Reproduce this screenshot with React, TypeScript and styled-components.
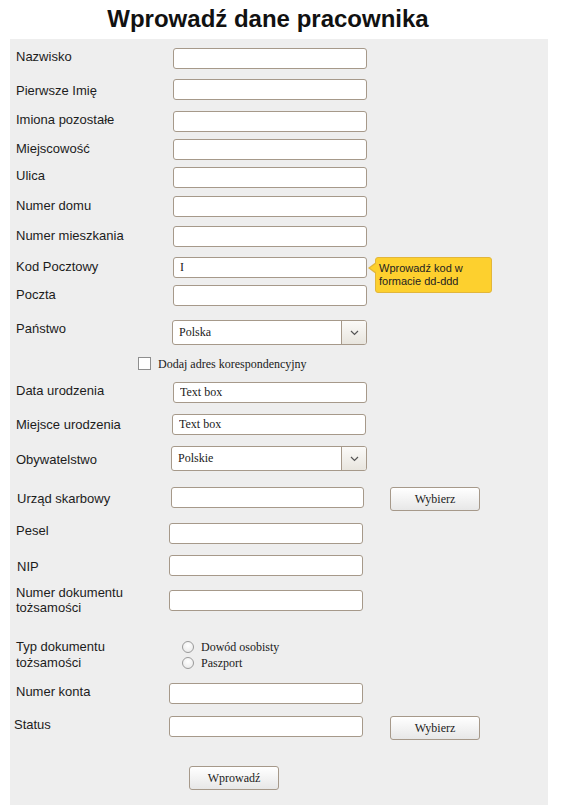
import React from "react";
import styled, { createGlobalStyle } from "styled-components";

const GlobalStyle = createGlobalStyle`
  html, body {
    margin: 0;
    padding: 0;
    background: #ffffff;
  }
  body {
    font-family: "Liberation Sans", Arial, sans-serif;
    color: #1c1c1c;
  }
`;

const Page = styled.div`
  width: 561px;
  padding-top: 5px;
`;

const Title = styled.h1`
  margin: 0;
  width: 536px;
  text-align: center;
  font-size: 24px;
  line-height: 28px;
  font-weight: bold;
  color: #111;
`;

const Panel = styled.div`
  margin: 6px 0 0 10px;
  width: 538px;
  padding: 9px 0 15px;
  background: #eeeeee;
  display: flex;
  flex-direction: column;
`;

const Row = styled.div<{ $h: number }>`
  display: flex;
  align-items: flex-start;
  height: ${(p) => p.$h}px;
`;

// labels sit 1px lower than the top of their row by default
const Label = styled.div<{ $x: number; $w: number; $y?: number; $lh?: number }>`
  flex: none;
  margin-left: ${(p) => p.$x - 10}px;
  width: ${(p) => p.$w}px;
  margin-top: ${(p) => (p.$y ?? 0) + 1}px;
  font-size: 13px;
  line-height: ${(p) => p.$lh ?? 15}px;
  color: #1c1c1c;
`;

const Field = styled.div<{ $w: number }>`
  position: relative;
  flex: none;
  width: ${(p) => p.$w}px;
`;

const TextInput = styled.input`
  display: block;
  box-sizing: border-box;
  width: 100%;
  height: 21px;
  margin: 0;
  padding: 0 6px;
  border: 1px solid #a6998a;
  border-radius: 3px;
  background: #fff;
  font-family: "Liberation Serif", "Times New Roman", serif;
  font-size: 12px;
  color: #1a1a1a;
  outline: none;
`;

const SelectBox = styled.div`
  box-sizing: border-box;
  display: flex;
  height: 25px;
  border: 1px solid #a6998a;
  border-radius: 3px;
  background: #fff;
  overflow: hidden;
`;

const SelectValue = styled.div`
  flex: 1;
  padding-left: 6px;
  font-family: "Liberation Serif", "Times New Roman", serif;
  font-size: 12px;
  line-height: 23px;
  color: #1a1a1a;
`;

const SelectArrow = styled.div`
  flex: none;
  width: 24px;
  border-left: 1px solid #a6998a;
  background: linear-gradient(#fbfaf8, #e8e5de);
  display: flex;
  align-items: center;
  justify-content: center;
`;

const Button = styled.button<{ $x: number; $w: number }>`
  flex: none;
  box-sizing: border-box;
  margin: 0 0 0 ${(p) => p.$x}px;
  width: ${(p) => p.$w}px;
  height: 24px;
  padding: 0;
  border: 1px solid #a6998a;
  border-radius: 3px;
  background: linear-gradient(#ffffff, #e7e7e7);
  font-family: "Liberation Serif", "Times New Roman", serif;
  font-size: 12px;
  color: #1a1a1a;
`;

const Tooltip = styled.div`
  position: absolute;
  left: 202px;
  top: 0;
  box-sizing: border-box;
  width: 117px;
  height: 36px;
  padding: 4px 3px;
  background: #fdd02e;
  border: 1px solid #e2b63a;
  border-radius: 3px;
  font-size: 11px;
  line-height: 13px;
  color: #222;

  &::before,
  &::after {
    content: "";
    position: absolute;
    top: 4px;
    border-style: solid;
    border-color: transparent;
  }
  &::before {
    left: -8px;
    border-width: 6px 8px 6px 0;
    border-right-color: #e2b63a;
  }
  &::after {
    left: -6px;
    top: 5px;
    border-width: 5px 7px 5px 0;
    border-right-color: #fdd02e;
  }
`;

const CheckRow = styled.label`
  display: flex;
  align-items: flex-start;
  margin-left: 128px;
`;

const CheckBox = styled.span`
  flex: none;
  box-sizing: border-box;
  width: 13px;
  height: 13px;
  border: 1px solid #8e8e8e;
  background: #fff;
`;

const SerifText = styled.span<{ $ml?: number; $mt?: number }>`
  margin-left: ${(p) => p.$ml ?? 0}px;
  margin-top: ${(p) => p.$mt ?? 0}px;
  font-family: "Liberation Serif", "Times New Roman", serif;
  font-size: 12px;
  line-height: 14px;
  color: #1a1a1a;
`;

const RadioList = styled.div`
  display: flex;
  flex-direction: column;
  margin-top: 1px;
`;

const RadioOption = styled.label`
  display: flex;
  align-items: center;
  height: 16px;
`;

const RadioDot = styled.span`
  flex: none;
  box-sizing: border-box;
  width: 12px;
  height: 12px;
  border-radius: 50%;
  border: 1px solid #9a9a9a;
  background: radial-gradient(circle at 50% 35%, #ffffff, #e6e6e6);
`;

type Kind = "text" | "select";

interface FieldRow {
  label: React.ReactNode;
  lx: number;
  ly: number;
  cx: number;
  w: number;
  h: number;
  kind?: Kind;
  value?: string;
  button?: boolean;
  tooltip?: string[];
}

const Chevron = () => (
  <svg width="9" height="6" viewBox="0 0 9 6">
    <path d="M1 1 L4.5 4.5 L8 1" fill="none" stroke="#555" strokeWidth="1.2" />
  </svg>
);

const top: FieldRow[] = [
  { label: "Nazwisko", lx: 16, ly: 0, cx: 173, w: 194, h: 31 },
  { label: "Pierwsze Imię", lx: 16, ly: 3, cx: 173, w: 194, h: 32 },
  { label: "Imiona pozostałe", lx: 16, ly: 0, cx: 173, w: 194, h: 28 },
  { label: "Miejscowość", lx: 16, ly: 1, cx: 173, w: 194, h: 28 },
  { label: "Ulica", lx: 16, ly: 0, cx: 173, w: 194, h: 29 },
  { label: "Numer domu", lx: 16, ly: 1, cx: 173, w: 194, h: 30 },
  { label: "Numer mieszkania", lx: 16, ly: 1, cx: 173, w: 194, h: 31 },
  {
    label: "Kod Pocztowy",
    lx: 16,
    ly: 1,
    cx: 173,
    w: 194,
    h: 28,
    value: "I",
    tooltip: ["Wprowadź kod w", "formacie dd-ddd"],
  },
  { label: "Poczta", lx: 16, ly: 1, cx: 173, w: 194, h: 35 },
  { label: "Państwo", lx: 16, ly: 0, cx: 172, w: 195, h: 37, kind: "select", value: "Polska" },
];

const middle: FieldRow[] = [
  { label: "Data urodzenia", lx: 16, ly: 0, cx: 173, w: 194, h: 32, value: "Text box" },
  { label: "Miejsce urodzenia", lx: 16, ly: 2, cx: 172, w: 194, h: 32, value: "Text box" },
  { label: "Obywatelstwo", lx: 16, ly: 5, cx: 171, w: 196, h: 41, kind: "select", value: "Polskie" },
  { label: "Urząd skarbowy", lx: 17, ly: 3, cx: 171, w: 193, h: 36, button: true },
  { label: "Pesel", lx: 16, ly: -1, cx: 169, w: 194, h: 32 },
  { label: "NIP", lx: 17, ly: 3, cx: 169, w: 194, h: 35 },
  {
    label: (
      <>
        Numer dokumentu
        <br />
        tożsamości
      </>
    ),
    lx: 16,
    ly: -6,
    cx: 169,
    w: 194,
    h: 48,
  },
];

const bottom: FieldRow[] = [
  { label: "Numer konta", lx: 16, ly: 0, cx: 169, w: 194, h: 33 },
  { label: "Status", lx: 14, ly: 0, cx: 169, w: 194, h: 50, button: true },
];

const renderRow = (r: FieldRow, i: number) => (
  <Row $h={r.h} key={i}>
    <Label $x={r.lx} $w={r.cx - r.lx} $y={r.ly}>
      {r.label}
    </Label>
    <Field $w={r.w}>
      {r.kind === "select" ? (
        <SelectBox>
          <SelectValue>{r.value}</SelectValue>
          <SelectArrow>
            <Chevron />
          </SelectArrow>
        </SelectBox>
      ) : (
        <TextInput readOnly defaultValue={r.value ?? ""} />
      )}
      {r.tooltip && (
        <Tooltip>
          {r.tooltip[0]}
          <br />
          {r.tooltip[1]}
        </Tooltip>
      )}
    </Field>
    {r.button && (
      <Button $x={390 - (r.cx + r.w)} $w={90}>
        Wybierz
      </Button>
    )}
  </Row>
);

export default function App() {
  return (
    <Page>
      <GlobalStyle />
      <Title>Wprowadź dane pracownika</Title>
      <Panel>
        {top.map(renderRow)}

        <Row $h={25}>
          <CheckRow>
            <CheckBox />
            <SerifText $ml={7}>Dodaj adres korespondencyjny</SerifText>
          </CheckRow>
        </Row>

        {middle.map(renderRow)}

        <Row $h={45}>
          <Label $x={16} $w={166} $lh={16}>
            Typ dokumentu
            <br />
            tożsamości
          </Label>
          <RadioList>
            <RadioOption>
              <RadioDot />
              <SerifText $ml={7}>Dowód osobisty</SerifText>
            </RadioOption>
            <RadioOption>
              <RadioDot />
              <SerifText $ml={7}>Paszport</SerifText>
            </RadioOption>
          </RadioList>
        </Row>

        {bottom.map(renderRow)}

        <Row $h={24}>
          <Button $x={179} $w={90}>
            Wprowadź
          </Button>
        </Row>
      </Panel>
    </Page>
  );
}
